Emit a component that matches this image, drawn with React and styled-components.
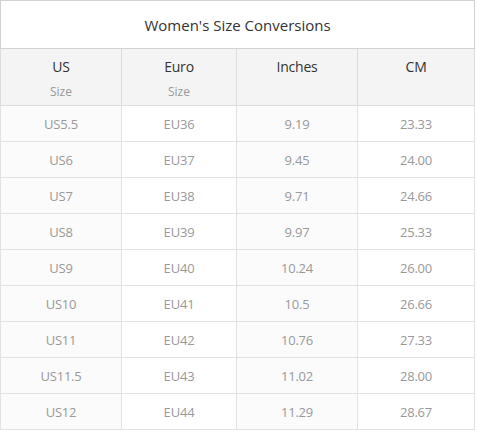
import React from 'react';
import styled, { createGlobalStyle } from 'styled-components';

const GlobalStyle = createGlobalStyle`
  body {
    margin: 0;
    background: #fff;
    font-family: 'Open Sans', 'Noto Sans', sans-serif;
  }
`;

const rows = [
  ['US5.5', 'EU36', '9.19', '23.33'],
  ['US6', 'EU37', '9.45', '24.00'],
  ['US7', 'EU38', '9.71', '24.66'],
  ['US8', 'EU39', '9.97', '25.33'],
  ['US9', 'EU40', '10.24', '26.00'],
  ['US10', 'EU41', '10.5', '26.66'],
  ['US11', 'EU42', '10.76', '27.33'],
  ['US11.5', 'EU43', '11.02', '28.00'],
  ['US12', 'EU44', '11.29', '28.67'],
];

// width of each column, in px
const columns = [
  { label: 'US', sub: 'Size', width: 121 },
  { label: 'Euro', sub: 'Size', width: 115 },
  { label: 'Inches', width: 121 },
  { label: 'CM', width: 117 },
];

const Table = styled.table`
  width: 475px;
  border-collapse: collapse;
  table-layout: fixed;
  border: 1px solid #d2d2d2;
`;

const Col = styled.col`
  width: ${(p) => p.$width}px;
`;

const Title = styled.th`
  height: 47px;
  padding: 0;
  font-size: 15px;
  font-weight: normal;
  color: #333;
  text-align: center;
  border: 1px solid #d2d2d2;
`;

const HeadCell = styled.th`
  height: 49px;
  padding: 7px 0 0;
  vertical-align: top;
  background: #f4f4f4;
  border: 1px solid #dcdcdc;
  border-top-color: #d2d2d2;
  font-weight: normal;
  text-align: center;
`;

const HeadLabel = styled.div`
  font-size: 14px;
  line-height: 22px;
  color: #333;
  letter-spacing: -0.2px;
`;

const HeadSub = styled.div`
  font-size: 12px;
  line-height: 27px;
  color: #9a9a9a;
`;

const Cell = styled.td`
  height: 35px;
  padding: 0;
  text-align: center;
  font-size: 13px;
  color: #999;
  border: 1px solid #e2e2e2;
  background: ${(p) => (p.$shaded ? '#fbfbfb' : '#fff')};
  letter-spacing: -0.2px;
`;

const App = () => {
  return (
    <>
      <GlobalStyle />
      <Table>
        <colgroup>
          {columns.map((c) => (
            <Col key={c.label} $width={c.width} />
          ))}
        </colgroup>
        <thead>
          <tr>
            <Title colSpan={4}>Women's Size Conversions</Title>
          </tr>
          <tr>
            {columns.map((c) => (
              <HeadCell key={c.label}>
                <HeadLabel>{c.label}</HeadLabel>
                {c.sub && <HeadSub>{c.sub}</HeadSub>}
              </HeadCell>
            ))}
          </tr>
        </thead>
        <tbody>
          {rows.map((row) => (
            <tr key={row[0]}>
              {row.map((v, i) => (
                <Cell key={i} $shaded={i % 2 === 0}>
                  {v}
                </Cell>
              ))}
            </tr>
          ))}
        </tbody>
      </Table>
    </>
  );
};

export default App;
